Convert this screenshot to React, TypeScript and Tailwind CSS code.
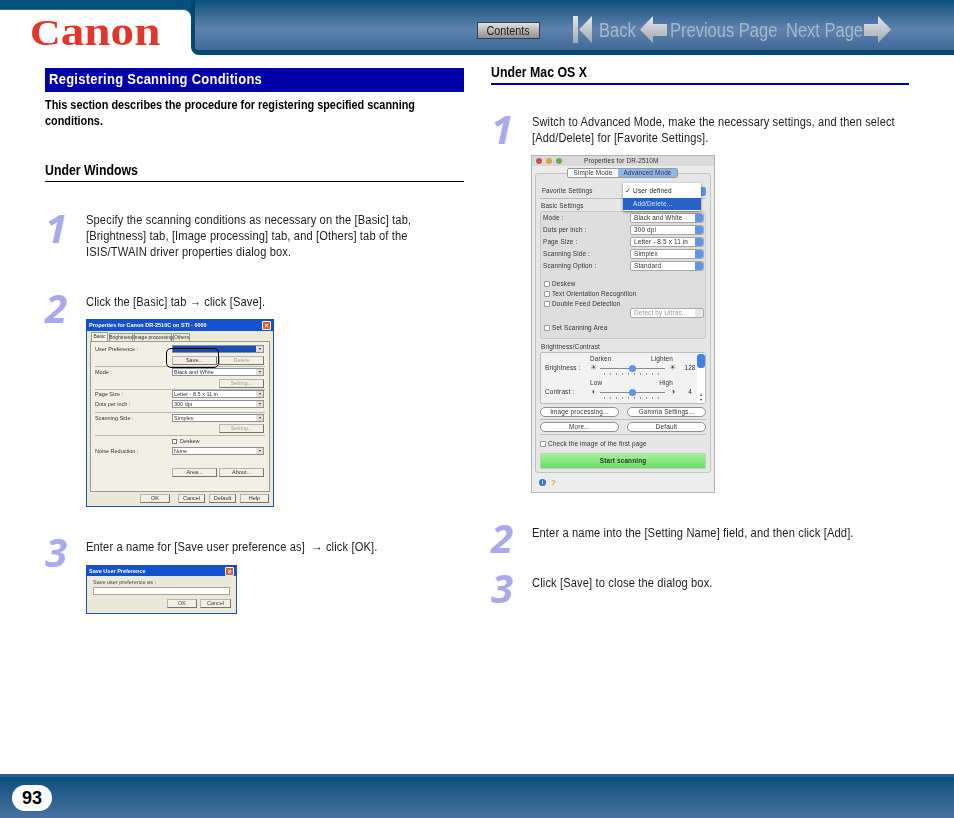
import React from "react";

const Numeral = ({ children, className }: { children: React.ReactNode; className?: string }) => (
  <div className={"h-[16px] w-[41px] shrink-0 font-['Open_Sans',sans-serif] italic font-bold text-[40px] leading-none text-[#a9a9ec] " + (className ?? "")}>
    {children}
  </div>
);

const Copy = ({ children, className }: { children: React.ReactNode; className?: string }) => (
  <div className={"origin-left scale-x-[0.89] whitespace-nowrap text-[12.5px] leading-[16px] tracking-[0.15px] text-[#1c1c1c] " + (className ?? "")}>{children}</div>
);

const SubHead = ({ children, className }: { children: React.ReactNode; className?: string }) => (
  <div className={"pb-[3px] " + (className ?? "")}>
    <div className="origin-left scale-x-[0.88] whitespace-nowrap text-[14px] font-bold leading-[16px] text-black">{children}</div>
  </div>
);

// windows style dialog pieces
const XpSelect = ({ label, selected }: { label?: string; selected?: boolean }) => (
  <div className="flex h-[8px] w-[92px] items-center border border-[#8a8f9c] bg-white">
    <div className={"h-full flex-1 pl-px leading-[6px] " + (selected ? "bg-[#1c4fb0]" : "")}>{label}</div>
    <div className="flex h-full w-[7px] items-center justify-center bg-[#e2e0d6] text-[4px] leading-none">▾</div>
  </div>
);

const XpBtn = ({ label, off, className }: { label: string; off?: boolean; className?: string }) => (
  <div className={"flex h-[9px] items-center justify-center border border-[#b8b5a6] border-r-[#77756a] border-b-[#77756a] bg-[#f2f0e6] " + (off ? "text-[#a5a297] " : "") + (className ?? "")}>
    {label}
  </div>
);

const XpRow = ({ label, children, className }: { label?: string; children?: React.ReactNode; className?: string }) => (
  <div className={"flex items-center " + (className ?? "")}>
    <div className="w-[81px] shrink-0 whitespace-nowrap pl-[4px]">{label}</div>
    {children}
  </div>
);

const XpRule = ({ className }: { className?: string }) => (
  <div className={"mx-[4px] h-px bg-[#b9b6a7] " + (className ?? "")} />
);

const CloseBox = () => (
  <div className="flex h-[9px] w-[9px] items-center justify-center rounded-[1px] border border-white bg-[#d9573a] text-[7px] font-bold leading-none text-white">×</div>
);

const WinDialog = () => (
  <div className="relative flex h-[188px] w-[188px] flex-col border border-[#1e4fb8] bg-[#ece9d8] text-[5.5px] text-[#333] blur-[0.3px]">
    <div className="flex h-[11px] shrink-0 items-center justify-between bg-[#1451cf] pl-[2px] pr-[2px] text-[5.5px] font-bold text-white">
      <span>Properties for Canon DR-2510C on STI - 0000</span>
      <CloseBox />
    </div>
    <div className="flex h-[10px] shrink-0 items-end gap-px whitespace-nowrap pl-[4px] pt-[2px] text-[5px]">
      <div className="flex h-[9px] w-[17px] items-center justify-center border border-b-0 border-[#9c9a8e] bg-[#f5f3ea]">Basic</div>
      <div className="flex h-[8px] w-[24px] items-center justify-center border border-b-0 border-[#9c9a8e]">Brightness</div>
      <div className="flex h-[8px] w-[38px] items-center justify-center border border-b-0 border-[#9c9a8e]">Image processing</div>
      <div className="flex h-[8px] w-[17px] items-center justify-center border border-b-0 border-[#9c9a8e]">Others</div>
    </div>
    <div className="mx-[3px] h-[151px] shrink-0 border border-[#9c9a8e] bg-[#f2f0e4] pt-[3px]">
      <XpRow label="User Preference :" className="h-[8px]"><XpSelect selected /></XpRow>
      <XpRow className="mt-[3px]">
        <div className="flex w-[92px] gap-[2px]">
          <XpBtn label="Save..." className="flex-1" />
          <XpBtn label="Delete" off className="flex-1" />
        </div>
      </XpRow>
      <XpRule className="mt-[1px]" />
      <XpRow label="Mode :" className="mt-[1px] h-[8px]"><XpSelect label="Black and White" /></XpRow>
      <XpRow className="mt-[3px]">
        <div className="flex w-[92px] justify-end"><XpBtn label="Setting..." off className="w-[45px]" /></div>
      </XpRow>
      <XpRule className="mt-[1px]" />
      <XpRow label="Page Size :" className="h-[8px]"><XpSelect label="Letter - 8.5 x 11 in" /></XpRow>
      <XpRow label="Dots per inch :" className="mt-[2px] h-[8px]"><XpSelect label="300 dpi" /></XpRow>
      <XpRule className="mt-[4px]" />
      <XpRow label="Scanning Side :" className="mt-[1px] h-[8px]"><XpSelect label="Simplex" /></XpRow>
      <XpRow className="mt-[2px]">
        <div className="flex w-[92px] justify-end"><XpBtn label="Setting..." off className="w-[45px]" /></div>
      </XpRow>
      <XpRule className="mt-[2px]" />
      <XpRow className="mt-[1px] h-[8px]">
        <div className="h-[5px] w-[5px] border border-[#777] bg-white" />
        <span className="ml-[3px]">Deskew</span>
      </XpRow>
      <XpRow label="Noise Reduction :" className="mt-[2px] h-[8px]"><XpSelect label="None" /></XpRow>
      <XpRow className="mt-[13px]">
        <div className="flex w-[92px] gap-[2px]">
          <XpBtn label="Area..." className="flex-1" />
          <XpBtn label="About..." className="flex-1" />
        </div>
      </XpRow>
    </div>
    <div className="mt-[2px] flex justify-end gap-[4px] pr-[4px]">
      <XpBtn label="OK" className="mr-[4px] w-[30px] border-[#444]" />
      <XpBtn label="Cancel" className="w-[27px]" />
      <XpBtn label="Default" className="w-[27px]" />
      <XpBtn label="Help" className="w-[29px]" />
    </div>
    {/* hand drawn highlight around the save button */}
    <div className="absolute left-[79px] top-[28px] h-[20px] w-[53px] rounded-[5px] border border-black" />
  </div>
);

const SaveDialog = () => (
  <div className="flex h-[49px] w-[151px] flex-col border border-[#1e4fb8] bg-[#ece9d8] text-[5.5px] text-[#444] blur-[0.3px]">
    <div className="flex h-[10px] shrink-0 items-center justify-between bg-[#1451cf] px-[2px] font-bold text-white">
      <span>Save User Preference</span>
      <CloseBox />
    </div>
    <div className="px-[6px] pt-[3px] leading-[7px]">Save user preference as :</div>
    <div className="mx-[6px] mt-px h-[8px] border border-[#a5a59a] bg-white" />
    <div className="mt-[4px] flex justify-end gap-[3px] pr-[5px]">
      <XpBtn label="OK" className="w-[30px]" />
      <XpBtn label="Cancel" className="w-[31px]" />
    </div>
  </div>
);

// mac style dialog pieces
const MacSelect = ({ label, off }: { label: string; off?: boolean }) => (
  <div className={"flex h-[10px] w-[74px] items-center rounded-[2px] border border-[#a9a9a9] bg-white pl-[3px] " + (off ? "text-[#999]" : "")}>
    <span className="flex-1 truncate">{label}</span>
    <div className={"h-full w-[8px] rounded-r-[2px] " + (off ? "bg-[#e8e8e8]" : "bg-[#5d96e6]")} />
  </div>
);

const MacRow = ({ label, value }: { label: string; value: string }) => (
  <div className="flex h-[12px] items-center pl-[2px]">
    <div className="w-[87px] shrink-0">{label}</div>
    <MacSelect label={value} />
  </div>
);

const MacCheck = ({ label, className }: { label: string; className?: string }) => (
  <div className={"flex h-[10px] items-center gap-px " + (className ?? "")}>
    <div className="h-[6px] w-[6px] rounded-[1px] border border-[#999] bg-white" />
    <span className="ml-px">{label}</span>
  </div>
);

const PillBtn = ({ label }: { label: string }) => (
  <div className="flex h-[10px] w-[79px] items-center justify-center rounded-full border border-[#8f8f8f] bg-white">{label}</div>
);

const Slider = ({ left, right, value }: { left: string; right: string; value: string }) => (
  <div className="flex h-[10px] items-center">
    <span className="w-[12px] text-center text-[8px] leading-none text-[#555]">{left}</span>
    <div className="relative ml-0 mr-[2px] h-px w-[65px] bg-[#8a8a8a]">
      <div className="absolute left-[29px] top-[-3px] h-[7px] w-[7px] rounded-full bg-[#5d96e6]" />
      <div className="absolute left-[4px] right-[4px] top-[5px] h-[2px] bg-[repeating-linear-gradient(90deg,#999_0,#999_1px,transparent_1px,transparent_6px)]" />
    </div>
    <span className="w-[12px] text-center text-[8px] leading-none text-[#555]">{right}</span>
    <span className="ml-[4px] w-[14px] text-center">{value}</span>
  </div>
);

const MacDialog = () => (
  <div className="relative flex h-[338px] w-[184px] flex-col border border-[#b5b5b5] bg-[#ececec] text-[6.4px] tracking-[0.15px] text-[#333] blur-[0.3px]">
    <div className="flex h-[10px] shrink-0 items-center bg-[#d9d9d9] pl-[4px]">
      <div className="h-[6px] w-[6px] rounded-full bg-[#c9504a]" />
      <div className="ml-[4px] h-[6px] w-[6px] rounded-full bg-[#e0a63b]" />
      <div className="ml-[4px] h-[6px] w-[6px] rounded-full bg-[#63b04c]" />
      <span className="ml-[22px]">Properties for DR-2510M</span>
    </div>
    <div className="relative z-10 ml-[35px] mt-[2px] flex h-[10px] w-[111px] shrink-0 items-center overflow-hidden rounded-[2px] border border-[#9a9a9a] bg-white whitespace-nowrap">
      <div className="w-[50px] text-center">Simple Mode</div>
      <div className="flex h-full flex-1 items-center justify-center bg-[#8db8ee]">Advanced Mode</div>
    </div>
    <div className="mx-[3px] mt-[-5px] flex h-[300px] shrink-0 flex-col rounded-[3px] border border-[#c4c4c4] bg-[#e6e6e6] px-[4px] pt-[12px]">
      <div className="flex h-[10px] items-center justify-between pl-[2px]">
        <span>Favorite Settings</span>
        <div className="h-[9px] w-[8px] rounded-r-[2px] bg-[#5d96e6]" />
      </div>
      <div className="mt-[2px] h-px bg-[#bdbdbd]" />
      <div className="mt-[2px] h-[10px] pl-px leading-[10px]">Basic Settings</div>
      <div className="flex h-[128px] shrink-0 flex-col rounded-[3px] border border-[#c9c9c9] bg-[#dedede]">
        <MacRow label="Mode :" value="Black and White" />
        <MacRow label="Dots per inch :" value="300 dpi" />
        <MacRow label="Page Size :" value="Letter - 8.5 x 11 in" />
        <MacRow label="Scanning Side :" value="Simplex" />
        <MacRow label="Scanning Option :" value="Standard" />
        <MacCheck label="Deskew" className="ml-[3px] mt-[7px]" />
        <MacCheck label="Text Orientation Recognition" className="ml-[3px]" />
        <MacCheck label="Double Feed Detection" className="ml-[3px]" />
        <div className="ml-[89px] mt-[-1px]"><MacSelect label="Detect by Ultras..." off /></div>
        <MacCheck label="Set Scanning Area" className="ml-[3px] mt-[5px]" />
      </div>
      <div className="mt-[3px] h-[10px] pl-px leading-[10px]">Brightness/Contrast</div>
      <div className="flex h-[52px] shrink-0 rounded-[2px] border border-[#bdbdbd] bg-[#f2f2f2]">
        <div className="flex-1 pl-[4px] pt-[2px]">
          <div className="flex h-[8px] items-center justify-between pl-[45px] pr-[24px]"><span>Darken</span><span>Lighten</span></div>
          <div className="flex h-[10px] items-center"><span className="w-[43px]">Brightness :</span><Slider left="☀" right="☀" value="128" /></div>
          <div className="mt-[6px] flex h-[8px] items-center justify-between pl-[45px] pr-[24px]"><span>Low</span><span>High</span></div>
          <div className="flex h-[10px] items-center"><span className="w-[43px]">Contrast :</span><Slider left="◐" right="◑" value="4" /></div>
        </div>
        <div className="flex w-[8px] flex-col justify-between bg-white pb-px text-center text-[4px] leading-[5px]">
          <div className="mt-px h-[14px] rounded-[3px] bg-[#3f83e0]" />
          <div>▴<br />▾</div>
        </div>
      </div>
      <div className="mt-[3px] flex justify-between"><PillBtn label="Image processing..." /><PillBtn label="Gamma Settings..." /></div>
      <div className="mt-[2px] h-px bg-[#bdbdbd]" />
      <div className="mt-[2px] flex justify-between"><PillBtn label="More..." /><PillBtn label="Default" /></div>
      <div className="mt-[2px] h-px bg-[#bdbdbd]" />
      <MacCheck label="Check the image of the first page" className="mt-[4px]" />
      <div className="mt-[4px] flex h-[16px] items-center justify-center border border-[#b5d8b5] bg-gradient-to-b from-[#a4f09a] to-[#66dd66] font-bold">
        Start scanning
      </div>
    </div>
    <div className="flex flex-1 items-center gap-[5px] pl-[7px]">
      <div className="flex h-[7px] w-[7px] items-center justify-center rounded-full bg-[#3c74c4] text-[5px] font-bold text-white">i</div>
      <span className="text-[8px] font-bold leading-none text-[#d9a520]">?</span>
    </div>
    {/* open popup menu */}
    <div className="absolute left-[91px] top-[27px] z-20 w-[78px] rounded-b-[2px] bg-white text-[6.5px] text-[#222] shadow-[0_1px_3px_rgba(0,0,0,0.45)]">
      <div className="flex h-[15px] items-center pl-[2px]">✓ User defined</div>
      <div className="flex h-[12px] items-center bg-[#2a63c7] pl-[10px] text-[#cfe0ff]">Add/Delete...</div>
      <div className="h-[1px]" />
    </div>
  </div>
);

const ArrowLeft = () => (
  <svg width="27" height="27" viewBox="0 0 27 27">
    <defs>
      <linearGradient id="al" x1="0" y1="0" x2="0" y2="1">
        <stop offset="0" stopColor="#e4e6ea" />
        <stop offset="1" stopColor="#a3a9b2" />
      </linearGradient>
    </defs>
    <polygon points="0,13.5 13,0 13,8 27,8 27,20 13,20 13,27" fill="url(#al)" />
  </svg>
);

const ArrowRight = () => (
  <svg width="27" height="27" viewBox="0 0 27 27">
    <defs>
      <linearGradient id="ar" x1="0" y1="0" x2="0" y2="1">
        <stop offset="0" stopColor="#e4e6ea" />
        <stop offset="1" stopColor="#a3a9b2" />
      </linearGradient>
    </defs>
    <polygon points="27,13.5 14,0 14,8 0,8 0,20 14,20 14,27" fill="url(#ar)" />
  </svg>
);

const BackIcon = () => (
  <svg width="20" height="27" viewBox="0 0 20 27">
    <defs>
      <linearGradient id="bk" x1="0" y1="0" x2="0" y2="1">
        <stop offset="0" stopColor="#e4e6ea" />
        <stop offset="1" stopColor="#a3a9b2" />
      </linearGradient>
    </defs>
    <rect x="0" y="0" width="5" height="27" fill="url(#bk)" />
    <polygon points="6,13.5 19,0 19,27" fill="url(#bk)" />
  </svg>
);

const NavLabel = ({ children, className }: { children: React.ReactNode; className?: string }) => (
  <span className={"origin-left scale-x-[0.825] whitespace-nowrap text-[20px] leading-none " + (className ?? "")}>{children}</span>
);

const Header = () => (
  <div className="flex h-[55px] shrink-0">
    <div className="w-[191px] shrink-0 bg-[#04507f] pt-[9px]">
      <div className="flex h-[46px] items-start rounded-tr-[8px] border-t border-[#3f6d98] bg-white pl-[30px] pt-[2px]">
        <div className="flex origin-left scale-x-[1.18] items-baseline font-['Liberation_Serif',serif] font-bold leading-[40px] text-[#e2352b]">
          <span className="text-[36px]">C</span>
          <span className="text-[40px]">anon</span>
        </div>
      </div>
    </div>
    <div className="flex-1 bg-white">
      <div className="flex h-full rounded-bl-[8px] border-b-[5px] border-l-[4px] border-[#07466f] bg-gradient-to-b from-[#02507f] via-[#5f83ad] via-[58%] to-[#3f6a98] pl-[282px]">
        <div className="flex h-[50px] items-center text-[#a9b7c9]">
          <div className="mt-[11px] flex h-[17px] w-[63px] items-center justify-center border border-[#30425a] bg-gradient-to-b from-[#e2e2e2] to-[#8f8f8f] text-[12px] leading-none text-[#222]">
            <span className="scale-x-[0.9] whitespace-nowrap">Contents</span>
          </div>
          <div className="ml-[33px] mt-[9px] flex items-center">
            <BackIcon />
            <NavLabel className="ml-[6px] w-[37px]">Back</NavLabel>
            <span className="ml-[4px] flex"><ArrowLeft /></span>
            <NavLabel className="ml-[3px] w-[112px]">Previous Page</NavLabel>
            <NavLabel className="ml-[4px] w-[78px]">Next Page</NavLabel>
            <ArrowRight />
          </div>
        </div>
      </div>
    </div>
  </div>
);

const Footer = () => (
  <div className="flex h-[44px] shrink-0 items-center border-t-[3px] border-[#2f6190] bg-gradient-to-b from-[#03507f] to-[#47729e] pl-[12px]">
    <div className="flex h-[26px] w-[40px] items-center justify-center rounded-full bg-white text-[18px] font-bold leading-none text-black">93</div>
  </div>
);

export default function App() {
  return (
    <div className="flex h-[818px] w-[954px] flex-col overflow-hidden bg-white font-['Liberation_Sans',Arial,sans-serif]">
      <Header />
      <div className="flex flex-1 gap-[27px] pl-[45px]">
        <div className="w-[419px] shrink-0 pt-[13px]">
          <div className="flex h-[24px] items-center bg-[#0000a8] pl-[4px] text-white">
            <span className="origin-left scale-x-[0.895] whitespace-nowrap text-[14.5px] font-bold tracking-[0.3px]">Registering Scanning Conditions</span>
          </div>
          <div className="mt-[5px] origin-left scale-x-[0.905] whitespace-nowrap text-[12px] font-bold leading-[16px] text-black">
            This section describes the procedure for registering specified scanning
            <br />
            conditions.
          </div>
          <SubHead className="mt-[33px] border-b border-black">Under Windows</SubHead>
          <div className="mt-[26px] flex">
            <Numeral className="mt-[0px]">1</Numeral>
            <Copy className="mt-[4px]">
              Specify the scanning conditions as necessary on the [Basic] tab,
              <br />
              [Brightness] tab, [Image processing] tab, and [Others] tab of the
              <br />
              ISIS/TWAIN driver properties dialog box.
            </Copy>
          </div>
          <div className="mt-[34px] flex">
            <Numeral className="mt-[-6px]">2</Numeral>
            <div>
              <Copy>Click the [Basic] tab → click [Save].</Copy>
              <div className="mt-[9px]"><WinDialog /></div>
            </div>
          </div>
          <div className="mt-[32px] flex">
            <Numeral className="mt-[-7px]">3</Numeral>
            <div>
              <Copy>Enter a name for [Save user preference as] &nbsp;→ click [OK].</Copy>
              <div className="mt-[10px]"><SaveDialog /></div>
            </div>
          </div>
        </div>
        <div className="w-[418px] shrink-0 pt-[9px]">
          <SubHead className="border-b-2 border-[#0000a8]">Under Mac OS X</SubHead>
          <div className="mt-[29px] flex">
            <Numeral className="mt-[-5px]">1</Numeral>
            <div>
              <Copy className="scale-x-[0.882]">
                Switch to Advanced Mode, make the necessary settings, and then select
                <br />
                [Add/Delete] for [Favorite Settings].
              </Copy>
              <div className="ml-[-1px] mt-[9px]"><MacDialog /></div>
            </div>
          </div>
          <div className="mt-[32px] flex">
            <Numeral className="mt-[-7px]">2</Numeral>
            <Copy>Enter a name into the [Setting Name] field, and then click [Add].</Copy>
          </div>
          <div className="mt-[34px] flex">
            <Numeral className="mt-[-7px]">3</Numeral>
            <Copy>Click [Save] to close the dialog box.</Copy>
          </div>
        </div>
      </div>
      <Footer />
    </div>
  );
}
